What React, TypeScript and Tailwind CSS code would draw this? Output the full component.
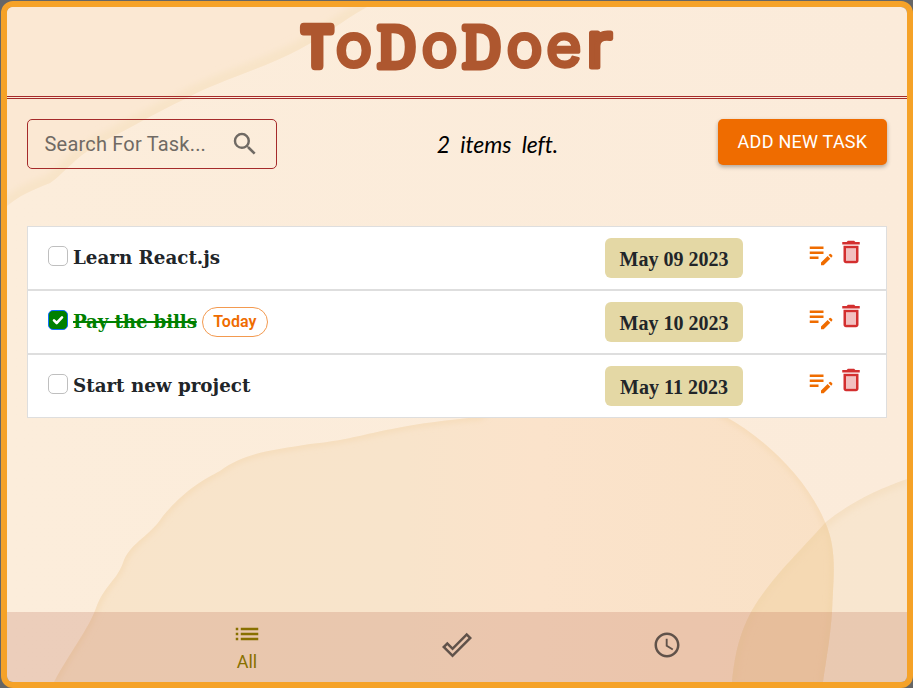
import React from "react";
import { MdAccessTime, MdDoneOutline, MdEditNote, MdList, MdSearch } from "react-icons/md";

type Task = { title: string; date: string; done?: boolean; today?: boolean };

const tasks: Task[] = [
  { title: "Learn React.js", date: "May 09 2023" },
  { title: "Pay the bills", date: "May 10 2023", done: true, today: true },
  { title: "Start new project", date: "May 11 2023" },
];

function Backdrop() {
  return (
    <svg className="absolute inset-0 -z-10 h-full w-full" viewBox="7 7 900 675" preserveAspectRatio="none" aria-hidden="true">
      <defs>
        <linearGradient id="sheet" x1="0" x2="1">
          <stop offset="0" stopColor="#fceddb" />
          <stop offset="1" stopColor="#fbebda" />
        </linearGradient>
        <linearGradient id="dune" x1="0" x2="1">
          <stop offset="0" stopColor="#f8e4ca" />
          <stop offset="0.45" stopColor="#f8e4cb" />
          <stop offset="0.62" stopColor="#fbe3cb" />
          <stop offset="1" stopColor="#f9e1c6" />
        </linearGradient>
        <filter id="soft"><feGaussianBlur stdDeviation="3" /></filter>
        <clipPath id="duneClip">
          <path d="M54 682C70 652 88 630 96 608C105 584 118 580 124 560C132 542 150 536 163 516C185 490 203 480 220 471C245 452 275 450 310 444C365 439 378 426 480 417C540 365 660 370 726 417C765 438 808 480 825 522C838 550 833 580 832 612C830 640 826 660 823 682Z" />
        </clipPath>
        <clipPath id="cornerClip"><path d="M7 7H367C340 22 325 36 300 49C260 70 215 82 187 98C155 113 130 128 104 141C75 156 65 173 50 183C30 191 20 195 7 206Z" /></clipPath>
        <clipPath id="rightClip"><path d="M907 479C875 490 847 505 826 522C799 552 780 570 762 595C742 622 735 650 732 682H907Z" /></clipPath>
      </defs>
      <rect x="7" y="7" width="900" height="675" fill="url(#sheet)" />
      <g clipPath="url(#cornerClip)">
        <rect x="7" y="7" width="370" height="205" fill="#fbe8d3" />
        <path d="M367 7C340 22 325 36 300 49C260 70 215 82 187 98C155 113 130 128 104 141C75 156 65 173 50 183C30 191 20 195 7 206" fill="none" stroke="#f8e4c8" strokeWidth="17" filter="url(#soft)" />
      </g>
      <g clipPath="url(#duneClip)">
        <rect x="50" y="370" width="790" height="320" fill="url(#dune)" />
        <path d="M54 682C70 652 88 630 96 608C105 584 118 580 124 560C132 542 150 536 163 516C185 490 203 480 220 471C245 452 275 450 310 444C365 439 378 426 480 417C540 365 660 370 726 417C765 438 808 480 825 522C838 550 833 580 832 612C830 640 826 660 823 682" fill="none" stroke="#f3d6ad" strokeOpacity=".7" strokeWidth="5" filter="url(#soft)" />
      </g>
      <g clipPath="url(#rightClip)">
        <rect x="730" y="470" width="180" height="212" fill="#f0d2a6" fillOpacity=".2" />
        <path d="M907 479C875 490 847 505 826 522C799 552 780 570 762 595C742 622 735 650 732 682" fill="none" stroke="#f0d2a5" strokeOpacity=".3" strokeWidth="10" filter="url(#soft)" />
        <g clipPath="url(#duneClip)"><rect x="730" y="500" width="110" height="182" fill="#f2d3a5" fillOpacity=".45" /></g>
      </g>
    </svg>
  );
}

function Wordmark() {
  return (
    <svg className="h-[80px] w-[340px]" viewBox="287 7 340 80" role="img" aria-label="ToDoDoer">
      <text y="65.5" fill="#ae572f" stroke="#ae572f" strokeLinejoin="round" strokeLinecap="round" strokeWidth="4" fontWeight="400" fontFamily="Inter, sans-serif">
        <tspan x="301.5" fontSize="53" strokeWidth="8.5" textLength="31.5" lengthAdjust="spacingAndGlyphs">T</tspan>
        <tspan x="335.5" y="67" fontSize="61">o</tspan>
        <tspan x="378" y="66.5" fontSize="61" strokeWidth="7" fontFamily="'Liberation Serif', serif" textLength="37" lengthAdjust="spacingAndGlyphs">D</tspan>
        <tspan x="421.5" y="67" fontSize="60">o</tspan>
        <tspan x="463" y="66.5" fontSize="61" strokeWidth="7" fontFamily="'Liberation Serif', serif" textLength="37" lengthAdjust="spacingAndGlyphs">D</tspan>
        <tspan x="506.5" y="67" fontSize="60">o</tspan>
        <tspan x="546" fontSize="61" strokeWidth="3.5">e</tspan>
        <tspan x="586.5" y="66.5" fontSize="62" strokeWidth="5" textLength="25.5" lengthAdjust="spacingAndGlyphs">r</tspan>
      </text>
    </svg>
  );
}

function DeleteIcon() {
  return (
    <svg className="size-[30px]" viewBox="0 0 24 24" fill="currentColor">
      <path opacity=".3" d="M8 9h8v10H8z" />
      <path d="m15.5 4-1-1h-5l-1 1H5v2h14V4zM6 19c0 1.1.9 2 2 2h8c1.1 0 2-.9 2-2V7H6v12zM8 9h8v10H8V9z" />
    </svg>
  );
}

function TaskRow({ task }: { task: Task }) {
  return (
    <li className="flex h-16 border border-[#dedede] bg-white pl-5">
      <div className="flex w-[557px] items-start pt-[19px]">
        <span className={task.done ? "flex size-5 items-center justify-center rounded-[5px] border border-[#0d6efd] bg-[green]" : "size-5 rounded-[5px] border border-[#bfbfbf] bg-white"}>
          {task.done && (
            <svg className="size-5 shrink-0" viewBox="0 0 20 20" fill="none" stroke="white" strokeWidth="2.6" strokeLinecap="round" strokeLinejoin="round"><path d="m6 10.3 2.7 2.7 5.3-5.6" /></svg>
          )}
        </span>
        <span className={`ml-[5px] font-['DejaVu_Serif',serif] text-[18.3px] leading-6 font-bold whitespace-nowrap ${task.done ? "tracking-[-0.15px] text-[green] line-through decoration-2" : "text-[#212529]"}`}>{task.title}</span>
        {task.today && <span className="-mt-[3px] ml-[5px] flex h-[30px] w-[66px] items-center justify-center rounded-full border border-[#f39a50] text-base font-semibold text-[#ef6c00]">Today</span>}
      </div>
      <div className="mt-[11px] flex h-10 w-[138px] items-center justify-center rounded-md bg-[#e4d8a5] pt-[2px] font-['Liberation_Serif',serif] text-[20px] font-bold whitespace-nowrap text-[#212529]">{task.date}</div>
      <div className="mt-[10px] ml-[63px] flex items-start">
        <MdEditNote className="mt-[2px] size-[30px] text-[#ef6c00]" />
        <span className="text-[#d32f2f]"><DeleteIcon /></span>
      </div>
    </li>
  );
}

export default function App() {
  return (
    <div className="h-[688px] w-[913px] bg-[#666666] pt-px pl-px font-[Roboto,sans-serif]">
      <main className="relative isolate flex h-[687px] w-[912px] flex-col overflow-hidden rounded-xl border-6 border-[#f5a228]">
        <Backdrop />
        <header className="flex h-[92px] shrink-0 justify-center border-b-3 border-double border-[#a52a2a]">
          <Wordmark />
        </header>
        <section className="mx-5 mt-5 flex h-[50px] items-start justify-between">
          <div className="flex h-[50px] w-[250px] items-center rounded-[5px] border border-[#a52a2a] pl-4 text-[#706a64]">
            <span className="w-[186px] pl-[0.5px] text-[20px] tracking-[0.2px]">Search For Task...</span>
            <MdSearch className="size-[30px]" />
          </div>
          <p className="mt-[9px] font-[Lato,sans-serif] text-[23px] leading-8 tracking-[-0.1px] whitespace-pre text-black italic [word-spacing:5px]">2 items left.</p>
          <button className="h-[46px] w-[169px] rounded-[5px] bg-[#ef6c00] pb-[2px] text-[18px] tracking-[0.25px] whitespace-nowrap text-white shadow-[0_2px_4px_rgba(0,0,0,0.3)]">ADD NEW TASK</button>
        </section>
        <ul className="mx-5 mt-[57px]">
          {tasks.map((task) => <TaskRow key={task.title} task={task} />)}
        </ul>
        <nav className="mt-auto flex h-[70px] shrink-0 justify-center bg-[#ae533a]/20">
          <a className="flex w-[210px] flex-col items-center pt-[7px] text-[#887000]">
            <MdList className="size-[30px]" />
            <span className="text-[18px] leading-[26px]">All</span>
          </a>
          <a className="flex w-[210px] items-center justify-center pb-1 text-[#60524a]"><MdDoneOutline className="size-[30px]" /></a>
          <a className="flex w-[210px] items-center justify-center pb-1 text-[#60524a]"><MdAccessTime className="size-[30px]" /></a>
        </nav>
      </main>
    </div>
  );
}
